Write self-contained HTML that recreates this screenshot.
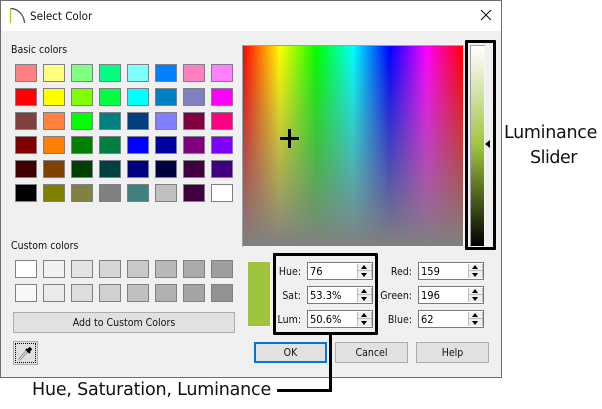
<!DOCTYPE html>
<html><head><meta charset="utf-8"><style>
html,body{margin:0;padding:0;background:#fff}
#p{position:relative;width:602px;height:409px;overflow:hidden;background:#fff;font-family:"DejaVu Sans Condensed","DejaVu Sans","Liberation Sans",sans-serif;font-stretch:condensed;font-size:10.5px;color:#000}
#p div,#p span{position:absolute;box-sizing:border-box;white-space:nowrap}
.s{width:22px;height:18px;border:1px solid #808088}
.t{line-height:14px}
.i{width:66px;height:18px;background:#fff;border:1px solid #7a7a7a;padding-left:2px;line-height:18px;font-size:11px}
.u{left:49px;top:1px;width:15px;height:14px;background:#f0f0f0;border-left:1px solid #bbb;border-right:1px solid #bbb}
.u b{position:absolute;left:3px;width:0;height:0;border-left:3.500px solid transparent;border-right:3.500px solid transparent}
.u .a{top:1px;border-bottom:4px solid #000}
.u .d{top:9px;border-top:4px solid #000}
.u i{position:absolute;left:0;right:0;top:6px;height:1px;background:#bbb}
.b{height:21px;background:#e1e1e1;border:1px solid #adadad;text-align:center;line-height:21px;font-size:10.5px;color:#111}
.r{text-align:right;line-height:20px;width:34px;font-size:10.5px}
.k{background:#000}
.n{font-size:17.5px;line-height:22px;color:#111;font-stretch:normal;font-family:"DejaVu Sans",sans-serif}
</style></head><body><div id="p">
<div style="left:0;top:0;width:502px;height:378px;background:#f0f0f0;border:1px solid #6e6e6e;border-width:1px 1px 1px 1px"></div>
<div style="left:1px;top:1px;width:500px;height:30px;background:#fff"></div>
<svg style="position:absolute;left:8px;top:6px" width="20" height="20" viewBox="0 0 20 20"><path d="M2.500 2.500C9 2.500 16 8 16.500 17" fill="none" stroke="#444" stroke-width="1.200"/><path d="M2.500 2.500V17" stroke="#a4c639" stroke-width="1.300"/></svg>
<div class="t" style="left:30px;top:9px;font-size:11.5px;color:#111">Select Color</div>
<svg style="position:absolute;left:480px;top:9px" width="12" height="12"><path d="M1 1L11 11M11 1L1 11" stroke="#111" stroke-width="1.100"/></svg>
<div class="t" style="left:11px;top:43px;color:#111">Basic colors</div>

<div class="s" style="left:15px;top:64px;background:#ff8080"></div><div class="s" style="left:43px;top:64px;background:#ffff80"></div><div class="s" style="left:71px;top:64px;background:#80ff80"></div><div class="s" style="left:99px;top:64px;background:#00ff80"></div><div class="s" style="left:127px;top:64px;background:#80ffff"></div><div class="s" style="left:155px;top:64px;background:#0080ff"></div><div class="s" style="left:183px;top:64px;background:#ff80c0"></div><div class="s" style="left:211px;top:64px;background:#ff80ff"></div>
<div class="s" style="left:15px;top:88px;background:#ff0000"></div><div class="s" style="left:43px;top:88px;background:#ffff00"></div><div class="s" style="left:71px;top:88px;background:#80ff00"></div><div class="s" style="left:99px;top:88px;background:#00ff40"></div><div class="s" style="left:127px;top:88px;background:#00ffff"></div><div class="s" style="left:155px;top:88px;background:#0080c0"></div><div class="s" style="left:183px;top:88px;background:#8080c0"></div><div class="s" style="left:211px;top:88px;background:#ff00ff"></div>
<div class="s" style="left:15px;top:112px;background:#804040"></div><div class="s" style="left:43px;top:112px;background:#ff8040"></div><div class="s" style="left:71px;top:112px;background:#00ff00"></div><div class="s" style="left:99px;top:112px;background:#008080"></div><div class="s" style="left:127px;top:112px;background:#004080"></div><div class="s" style="left:155px;top:112px;background:#8080ff"></div><div class="s" style="left:183px;top:112px;background:#800040"></div><div class="s" style="left:211px;top:112px;background:#ff0080"></div>
<div class="s" style="left:15px;top:136px;background:#800000"></div><div class="s" style="left:43px;top:136px;background:#ff8000"></div><div class="s" style="left:71px;top:136px;background:#008000"></div><div class="s" style="left:99px;top:136px;background:#008040"></div><div class="s" style="left:127px;top:136px;background:#0000ff"></div><div class="s" style="left:155px;top:136px;background:#0000a0"></div><div class="s" style="left:183px;top:136px;background:#800080"></div><div class="s" style="left:211px;top:136px;background:#8000ff"></div>
<div class="s" style="left:15px;top:160px;background:#400000"></div><div class="s" style="left:43px;top:160px;background:#804000"></div><div class="s" style="left:71px;top:160px;background:#004000"></div><div class="s" style="left:99px;top:160px;background:#004040"></div><div class="s" style="left:127px;top:160px;background:#000080"></div><div class="s" style="left:155px;top:160px;background:#000040"></div><div class="s" style="left:183px;top:160px;background:#400040"></div><div class="s" style="left:211px;top:160px;background:#400080"></div>
<div class="s" style="left:15px;top:184px;background:#000000"></div><div class="s" style="left:43px;top:184px;background:#808000"></div><div class="s" style="left:71px;top:184px;background:#808040"></div><div class="s" style="left:99px;top:184px;background:#808080"></div><div class="s" style="left:127px;top:184px;background:#408080"></div><div class="s" style="left:155px;top:184px;background:#c0c0c0"></div><div class="s" style="left:183px;top:184px;background:#400040"></div><div class="s" style="left:211px;top:184px;background:#ffffff"></div>

<div class="t" style="left:11px;top:239px;color:#111">Custom colors</div>
<div class="s" style="left:15px;top:260px;background:#ffffff"></div><div class="s" style="left:43px;top:260px;background:#f1f1f1"></div><div class="s" style="left:71px;top:260px;background:#e3e3e3"></div><div class="s" style="left:99px;top:260px;background:#d6d6d6"></div><div class="s" style="left:127px;top:260px;background:#c9c9c9"></div><div class="s" style="left:155px;top:260px;background:#b9b9b9"></div><div class="s" style="left:183px;top:260px;background:#ababab"></div><div class="s" style="left:211px;top:260px;background:#9e9e9e"></div>
<div class="s" style="left:15px;top:284px;background:#f8f8f8"></div><div class="s" style="left:43px;top:284px;background:#eaeaea"></div><div class="s" style="left:71px;top:284px;background:#dddddd"></div><div class="s" style="left:99px;top:284px;background:#d0d0d0"></div><div class="s" style="left:127px;top:284px;background:#c0c0c0"></div><div class="s" style="left:155px;top:284px;background:#b0b0b0"></div><div class="s" style="left:183px;top:284px;background:#a4a4a4"></div><div class="s" style="left:211px;top:284px;background:#929292"></div>

<div class="b" style="left:13px;top:312px;width:222px">Add to Custom Colors</div>
<div style="left:13px;top:341px;width:25px;height:24px;background:#e1e1e1;border:1px solid #adadad"></div>
<div style="left:15px;top:343px;width:21px;height:20px;border:1px dotted #000"></div>
<svg style="position:absolute;left:15px;top:343px" width="21" height="20" viewBox="0 0 21 20"><path d="M4 17L12 8" stroke="#777" stroke-width="2.600" fill="none"/><path d="M4 17L12 8" stroke="#eee" stroke-width="1" fill="none"/><path d="M11 6L15 10" stroke="#000" stroke-width="2" fill="none"/><path d="M13 8L16 5" stroke="#000" stroke-width="3.600" fill="none"/></svg>

<div style="left:242px;top:45px;width:222px;height:202px;background:#f4f4f4;border-left:1px solid #a0a0a0;border-top:1px solid #a0a0a0"></div>
<div style="left:243px;top:46px;width:220px;height:200px;background:linear-gradient(to bottom,rgba(128,128,128,0),#808080),linear-gradient(to right,#f00,#ff0 16.670%,#0f0 33.330%,#0ff 50%,#00f 66.670%,#f0f 83.330%,#f00)"></div>
<div class="k" style="left:280px;top:137px;width:19px;height:3px"></div>
<div class="k" style="left:288px;top:129px;width:3px;height:19px"></div>

<div style="left:470px;top:45px;width:15px;height:202px;background:#f4f4f4;border-left:1px solid #a0a0a0;border-top:1px solid #a0a0a0"></div>
<div style="left:471px;top:46px;width:13px;height:200px;background:linear-gradient(to bottom,#fff,#9fc43e 50%,#000)"></div>
<div style="left:485px;top:140px;width:0;height:0;border-top:4px solid transparent;border-bottom:4px solid transparent;border-right:5px solid #000"></div>
<div style="left:465px;top:40px;width:31px;height:210px;border:3px solid #000;border-radius:1px"></div>

<div style="left:248px;top:262px;width:23px;height:65px;background:#9fc43e;border-right:1px solid #fff;border-bottom:1px solid #fff"></div>

<div class="r" style="left:267px;top:262px;color:#111">Hue:</div>
<div class="r" style="left:267px;top:286px;color:#111">Sat:</div>
<div class="r" style="left:267px;top:310px;color:#111">Lum:</div>
<div class="i" style="left:307px;top:262px">76<div class="u"><b class="a"></b><i></i><b class="d"></b></div></div>
<div class="i" style="left:307px;top:286px">53.3%<div class="u"><b class="a"></b><i></i><b class="d"></b></div></div>
<div class="i" style="left:307px;top:310px">50.6%<div class="u"><b class="a"></b><i></i><b class="d"></b></div></div>
<div class="r" style="left:377px;top:262px;width:35px;color:#111">Red:</div>
<div class="r" style="left:377px;top:286px;width:35px;color:#111">Green:</div>
<div class="r" style="left:377px;top:310px;width:35px;color:#111">Blue:</div>
<div class="i" style="left:418px;top:262px">159<div class="u"><b class="a"></b><i></i><b class="d"></b></div></div>
<div class="i" style="left:418px;top:286px">196<div class="u"><b class="a"></b><i></i><b class="d"></b></div></div>
<div class="i" style="left:418px;top:310px">62<div class="u"><b class="a"></b><i></i><b class="d"></b></div></div>

<div class="b" style="left:254px;top:342px;width:73px;border:2px solid #0078d7;line-height:19px">OK</div>
<div class="b" style="left:335px;top:342px;width:73px">Cancel</div>
<div class="b" style="left:416px;top:342px;width:73px">Help</div>

<div style="left:273px;top:253px;width:105px;height:82px;border:3px solid #000;border-radius:1px"></div>
<div class="k" style="left:329px;top:335px;width:3px;height:57px"></div>
<div class="k" style="left:277px;top:389px;width:55px;height:3px;border-radius:1px"></div>

<div class="n" style="left:32px;top:379px;letter-spacing:-.2px">Hue, Saturation, Luminance</div>
<div class="n" style="left:504px;top:122px;letter-spacing:-.3px">Luminance</div>
<div class="n" style="left:530px;top:147px;letter-spacing:-.5px">Slider</div>
</div></body></html>
